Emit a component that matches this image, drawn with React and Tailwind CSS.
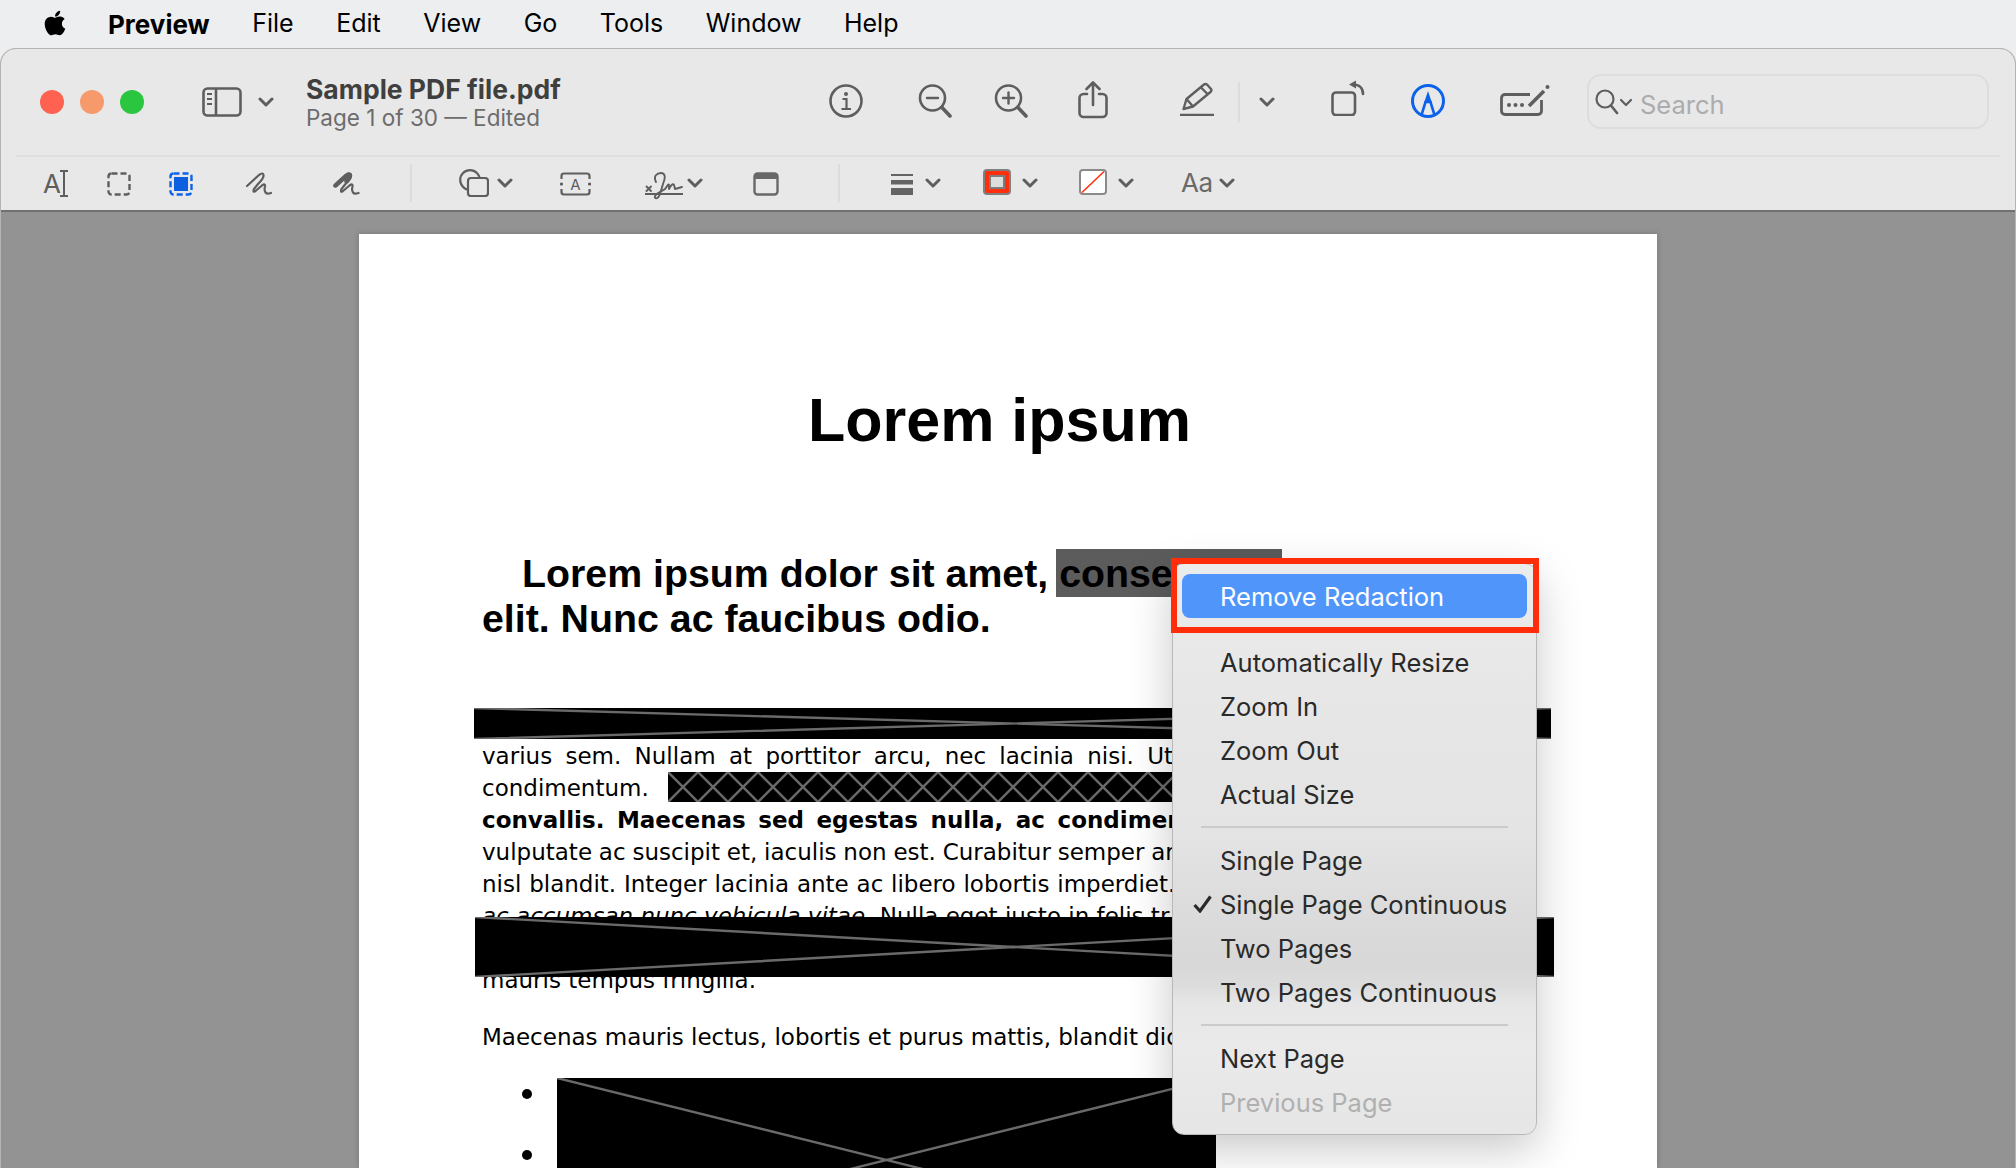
import { FaApple } from "react-icons/fa";

const stroke = "#5e5e5e";

function Chevron({ className = "" }) {
  return (
    <svg width="16" height="10" viewBox="0 0 16 10" fill="none" className={`shrink-0 ${className}`}>
      <path d="M2 2 L8 8 L14 2" stroke={stroke} strokeWidth="3" strokeLinecap="round" strokeLinejoin="round" />
    </svg>
  );
}

function Separator({ className = "" }) {
  return <div className={`w-[2px] shrink-0 bg-[#dcdcdc] ${className}`} />;
}

function Glass({ plus, className = "" }) {
  return (
    <svg width="34" height="34" viewBox="0 0 34 34" fill="none" stroke={stroke} className={`shrink-0 ${className}`}>
      <circle cx="14.5" cy="14" r="12.5" strokeWidth="2.6" />
      <path d="M24 23.5 L32 32" strokeWidth="3.6" strokeLinecap="round" />
      <path d="M9 14 H20" strokeWidth="2.4" strokeLinecap="round" />
      {plus && <path d="M14.5 8.5 V19.5" strokeWidth="2.4" strokeLinecap="round" />}
    </svg>
  );
}

const scribble = "M1 14 L13 3 Q17 0 17.5 3 Q18 6 12 12 L8 17 Q6.5 21 9.5 19 L16 13.5 Q19.5 11 19 14.5 Q18 18 19.5 20.5 Q21 22.5 25 21";

function TitleRow() {
  return (
    <div className="flex h-[106px] items-start pl-[39px]">
      <div className="mt-[41px] flex gap-[16px]">
        <div className="h-[24px] w-[24px] rounded-full bg-[#ff6251]" />
        <div className="h-[24px] w-[24px] rounded-full bg-[#f79a6b]" />
        <div className="h-[24px] w-[24px] rounded-full bg-[#2ac63f]" />
      </div>
      <svg width="40" height="30" viewBox="0 0 40 30" fill="none" stroke={stroke} className="ml-[58px] mt-[38px] shrink-0">
        <rect x="1.5" y="1.5" width="37" height="27" rx="4" strokeWidth="2.6" />
        <path d="M14 2 V28" strokeWidth="2.6" />
        <path d="M5 7 H10 M5 12 H10 M5 17 H10" strokeWidth="2" />
      </svg>
      <Chevron className="ml-[16px] mt-[48px]" />
      <div className="ml-[32px] mt-[24px] w-[523px] shrink-0">
        <div className="text-[26.5px] font-bold leading-[32px] text-[#3f3f3f]">Sample PDF file.pdf</div>
        <div className="text-[22.5px] leading-[26px] text-[#6c6c6c]">Page 1 of 30 — Edited</div>
      </div>
      <svg width="34" height="34" viewBox="0 0 34 34" fill="none" stroke={stroke} className="mt-[35px] shrink-0">
        <circle cx="17" cy="17" r="15.5" strokeWidth="2.6" />
        <circle cx="17" cy="10" r="2" fill={stroke} stroke="none" />
        <path d="M13.5 15 H17.5 V25 M12.5 25 H22" strokeWidth="2.2" />
      </svg>
      <Glass className="ml-[55px] mt-[35px]" />
      <Glass plus className="ml-[42px] mt-[35px]" />
      <svg width="30" height="38" viewBox="0 0 30 38" fill="none" stroke={stroke} strokeWidth="2.6" strokeLinecap="round" strokeLinejoin="round" className="ml-[50px] mt-[32px] shrink-0">
        <path d="M9 13 H5.5 a4 4 0 0 0 -4 4 V32 a4 4 0 0 0 4 4 H24.5 a4 4 0 0 0 4 -4 V17 a4 4 0 0 0 -4 -4 H21" />
        <path d="M15 24 V2 M8.5 8 L15 1.5 L21.5 8" />
      </svg>
      <svg width="34" height="34" viewBox="0 0 34 34" fill="none" stroke={stroke} strokeWidth="2.4" strokeLinejoin="round" className="ml-[72px] mt-[33px] shrink-0">
        <path d="M0 33 H34" strokeWidth="2.6" />
        <path d="M3.5 27 L6.5 17 L24 2.5 Q25.5 1.5 27 2.5 L31 7 Q32 8.5 30.5 10 L13 24.5 Z" />
        <path d="M21 5.5 L28 12.5 M6.5 17 L13 24.5" />
      </svg>
      <Separator className="ml-[24px] mt-[33px] h-[40px]" />
      <Chevron className="ml-[19px] mt-[48px]" />
      <svg width="36" height="36" viewBox="0 0 36 36" fill="none" stroke={stroke} className="ml-[55px] mt-[31px] shrink-0">
        <rect x="2.5" y="12.5" width="22.5" height="22.5" rx="3.5" strokeWidth="2.6" />
        <path d="M33 14 C33 8 29 4.5 23 4.5" strokeWidth="2.6" strokeLinecap="round" />
        <path d="M19 4.5 L26 0.5 V8.5 Z" fill={stroke} stroke="none" />
      </svg>
      <svg width="34" height="34" viewBox="0 0 34 34" fill="none" stroke="#0b63ec" className="ml-[45px] mt-[35px] shrink-0">
        <circle cx="17" cy="17" r="15.5" strokeWidth="3" />
        <path d="M10.5 31 L14.5 18 H19.5 L23.5 31" strokeWidth="2.6" />
        <path d="M17 7 L21 19 H13 Z" fill="#0b63ec" stroke="none" />
      </svg>
      <svg width="50" height="32" viewBox="0 0 50 32" fill="none" stroke={stroke} className="ml-[55px] mt-[35px] shrink-0">
        <path d="M30 10.5 H5 a3.5 3.5 0 0 0 -3.5 3.5 V27 a3.5 3.5 0 0 0 3.5 3.5 H38 a3.5 3.5 0 0 0 3.5 -3.5 V16" strokeWidth="2.8" />
        <circle cx="9" cy="21" r="2" fill={stroke} stroke="none" />
        <circle cx="15.5" cy="21" r="2" fill={stroke} stroke="none" />
        <circle cx="22" cy="21" r="2" fill={stroke} stroke="none" />
        <path d="M29 22 L44 7" strokeWidth="3.6" />
        <circle cx="47.5" cy="3" r="2" fill={stroke} stroke="none" />
      </svg>
      <div className="ml-[37px] mt-[25px] flex h-[55px] w-[402px] shrink-0 items-center rounded-[14px] border-2 border-[#dddddd] pl-[6px]">
        <svg width="38" height="26" viewBox="0 0 38 26" fill="none" stroke={stroke} className="shrink-0">
          <circle cx="10" cy="10" r="8.5" strokeWidth="2.2" />
          <path d="M16 16.5 L22 24" strokeWidth="2.6" strokeLinecap="round" />
          <path d="M26 11 L31 16 L36 11" strokeWidth="2.2" strokeLinecap="round" strokeLinejoin="round" />
        </svg>
        <span className="ml-[7px] mt-[8px] text-[25.5px] text-[#acacac]">Search</span>
      </div>
    </div>
  );
}

function ToolRow() {
  return (
    <div className="flex h-[53px] items-start pl-[42px]">
      <svg width="26" height="28" viewBox="0 0 26 28" fill="none" stroke={stroke} className="mt-[13px] shrink-0 overflow-visible">
        <text x="0" y="23" fontSize="26" fill={stroke} stroke="none">A</text>
        <path d="M17 1 H25 M21 1 V26 M17 26 H25" strokeWidth="2" />
      </svg>
      <svg width="24" height="24" viewBox="0 0 24 24" fill="none" stroke={stroke} className="ml-[38px] mt-[15px] shrink-0">
        <rect x="1.5" y="1.5" width="21" height="21" rx="3" strokeWidth="2.4" strokeDasharray="6 3" />
      </svg>
      <svg width="24" height="24" viewBox="0 0 24 24" fill="none" stroke="#0b63ec" className="ml-[38px] mt-[15px] shrink-0">
        <rect x="1.5" y="1.5" width="21" height="21" rx="3" strokeWidth="2.4" strokeDasharray="6 3" />
        <rect x="5" y="5" width="14" height="14" fill="#0b5fe0" stroke="none" />
      </svg>
      <svg width="26" height="24" viewBox="0 0 26 24" fill="none" stroke={stroke} strokeWidth="2.2" strokeLinecap="round" strokeLinejoin="round" className="ml-[53px] mt-[15px] shrink-0">
        <path d={scribble} />
      </svg>
      <svg width="27" height="24" viewBox="0 0 26 24" fill="none" stroke={stroke} strokeLinecap="round" strokeLinejoin="round" className="ml-[61px] mt-[15px] shrink-0">
        <path d={scribble} strokeWidth="2.2" />
        <path d="M2 13.5 L13 3.5 Q16 1.5 16.5 3.5 Q16.5 6 13 9.5" strokeWidth="4.4" />
      </svg>
      <Separator className="ml-[50px] mt-[7px] h-[38px]" />
      <svg width="30" height="28" viewBox="0 0 30 28" fill="#e8e8e8" stroke={stroke} strokeWidth="2.2" className="ml-[47px] mt-[12px] shrink-0">
        <circle cx="11" cy="11" r="9.8" />
        <rect x="9" y="9" width="20" height="18" rx="3" />
      </svg>
      <Chevron className="ml-[8px] mt-[21px]" />
      <svg width="31" height="24" viewBox="0 0 31 24" fill="none" stroke={stroke} strokeWidth="2.2" className="ml-[47px] mt-[15px] shrink-0">
        <path d="M1.5 7 V4 Q1.5 1.5 4 1.5 H27 Q29.5 1.5 29.5 4 V7 M1.5 17 V20 Q1.5 22.5 4 22.5 H27 Q29.5 22.5 29.5 20 V17" />
        <circle cx="1.5" cy="12" r="1.6" fill={stroke} stroke="none" />
        <circle cx="29.5" cy="12" r="1.6" fill={stroke} stroke="none" />
        <text x="15.5" y="18" fontSize="15" textAnchor="middle" fill={stroke} stroke="none">A</text>
      </svg>
      <svg width="38" height="28" viewBox="0 0 38 28" fill="none" stroke={stroke} strokeWidth="1.9" strokeLinecap="round" strokeLinejoin="round" className="ml-[54px] mt-[15px] shrink-0">
        <path d="M0 22 H38" strokeWidth="2" />
        <path d="M1.5 14.5 L6 19 M6 14.5 L1.5 19" />
        <path d="M11 10 C8 4 12 1 16 1 C20 1 21 5 18 12 L15 22 C13 28 9 27 10 24 C11 21 16 20 20 17 C22 15 23 11 24 13 L24 17 C26 13 28 11 29 13 L30 17 L37 15" />
      </svg>
      <Chevron className="ml-[4px] mt-[21px]" />
      <svg width="26" height="24" viewBox="0 0 26 24" fill="none" stroke="#686868" strokeWidth="2.4" className="ml-[50px] mt-[15px] shrink-0">
        <rect x="1.5" y="1.5" width="23" height="21" rx="3" />
        <path d="M2 3.5 Q2 2 4 2 H22 Q24 2 24 3.5 V7 H2 Z" fill="#686868" stroke="none" />
      </svg>
      <Separator className="ml-[59px] mt-[7px] h-[38px]" />
      <svg width="22" height="21" viewBox="0 0 22 21" fill="#646464" className="ml-[51px] mt-[17px] shrink-0">
        <rect y="0" width="22" height="2" />
        <rect y="6" width="22" height="4.5" />
        <rect y="14" width="22" height="7" />
      </svg>
      <Chevron className="ml-[12px] mt-[21px]" />
      <svg width="28" height="26" viewBox="0 0 28 26" className="ml-[42px] mt-[12px] shrink-0">
        <rect x="1" y="1" width="26" height="24" rx="3" fill="#ff2f0b" stroke="#808080" strokeWidth="2" />
        <rect x="7" y="7" width="14" height="12" fill="#dedede" stroke="#7d7d7d" strokeWidth="2" />
      </svg>
      <Chevron className="ml-[11px] mt-[21px]" />
      <svg width="28" height="26" viewBox="0 0 28 26" className="ml-[41px] mt-[12px] shrink-0">
        <rect x="1" y="1" width="26" height="24" rx="3" fill="#ffffff" stroke="#8a8a8a" strokeWidth="2" />
        <path d="M3 23.5 L25 2.5" stroke="#ff2f0b" strokeWidth="1.6" />
      </svg>
      <Chevron className="ml-[11px] mt-[21px]" />
      <span className="ml-[47px] mt-[9px] w-[30px] shrink-0 text-[26px] leading-[34px] tracking-[-0.5px] text-[#6a6a6a]">Aa</span>
      <Chevron className="ml-[8px] mt-[21px]" />
    </div>
  );
}

function Redacted({ className }) {
  return (
    <div className={`absolute bg-black ${className}`}>
      <svg className="h-full w-full" viewBox="0 0 100 100" preserveAspectRatio="none">
        <path d="M0 0 L100 100 M100 0 L0 100" stroke="#6a6a6a" strokeWidth="2.4" vectorEffect="non-scaling-stroke" fill="none" />
      </svg>
    </div>
  );
}

function HatchedRedaction() {
  return (
    <div className="absolute left-[309px] top-[538px] h-[30px] w-[520px] bg-black">
      <svg className="h-full w-full">
        <defs>
          <pattern id="hatch" width="30" height="30" patternUnits="userSpaceOnUse">
            <path d="M0 0 L30 30 M30 0 L0 30" stroke="#6a6a6a" strokeWidth="2.4" fill="none" />
          </pattern>
        </defs>
        <rect width="100%" height="100%" fill="url(#hatch)" />
      </svg>
    </div>
  );
}

function PdfPage() {
  return (
    <div className="relative ml-[358px] h-[934px] w-[1298px] overflow-hidden bg-white font-['Liberation_Sans'] text-black shadow-[0_0_6px_rgba(0,0,0,0.2)]">
      <div className="ml-[123px] w-[1035px] pt-[151px]">
        <h1 className="text-center text-[61px] font-bold leading-[70px]">Lorem ipsum</h1>
        <p className="mt-[96px] whitespace-nowrap text-[39.3px] font-bold leading-[45px]">
          <span className="ml-[40px]">Lorem ipsum dolor sit amet, conse</span>
          <br />
          elit. Nunc ac faucibus odio.
        </p>
        <div className="mt-[99px] whitespace-nowrap font-['DejaVu_Sans'] text-[23px] leading-[32px]">
          <div className="[word-spacing:6px]">varius sem. Nullam at porttitor arcu, nec lacinia nisi. Ut</div>
          <div>condimentum.</div>
          <div className="font-bold [word-spacing:4.5px]">convallis. Maecenas sed egestas nulla, ac condimen</div>
          <div className="[word-spacing:-0.5px]">vulputate ac suscipit et, iaculis non est. Curabitur semper ar</div>
          <div className="[word-spacing:0.5px]">nisl blandit. Integer lacinia ante ac libero lobortis imperdiet.</div>
          <div><em>ac accumsan nunc vehicula vitae.</em> Nulla eget justo in felis tr</div>
          <div className="h-[32px]" />
          <div>mauris tempus fringilla.</div>
          <div className="mt-[25px]">Maecenas mauris lectus, lobortis et purus mattis, blandit dic</div>
        </div>
        <div className="ml-[40px] mt-[36px] h-[10px] w-[10px] rounded-full bg-black" />
        <div className="ml-[40px] mt-[51px] h-[10px] w-[10px] rounded-full bg-black" />
      </div>
      <div className="absolute left-[697px] top-[315px] h-[48px] w-[226px] bg-black/[0.64]" />
      <Redacted className="left-[115px] top-[474px] h-[31px] w-[1077px]" />
      <HatchedRedaction />
      <Redacted className="left-[116px] top-[683px] h-[60px] w-[1079px]" />
      <Redacted className="left-[198px] top-[844px] h-[164px] w-[659px]" />
    </div>
  );
}

function MenuItem({ children, checked, disabled }) {
  return (
    <div className={`relative h-[44px] pl-[47px] text-[25.5px] leading-[46px] ${disabled ? "text-[#b0b0b0]" : "text-[#2a2a2a]"}`}>
      {checked && (
        <svg width="19" height="18" viewBox="0 0 19 18" fill="none" className="absolute left-[20px] top-[13px]">
          <path d="M1.5 10 L7 16 L17.5 1.5" stroke="#2a2a2a" strokeWidth="3.2" />
        </svg>
      )}
      {children}
    </div>
  );
}

function MenuDivider() {
  return (
    <div className="flex h-[22px] items-center px-[28px]">
      <div className="h-[2px] w-full bg-[#cbcbcb]" />
    </div>
  );
}

function ContextMenu() {
  return (
    <div className="absolute left-[1172px] top-[563px] w-[365px] rounded-[12px] border border-[#b8b8b8] bg-[linear-gradient(180deg,#ebecec_0%,#e9e9e9_13%,#e5e5e5_33%,#e4e4e4_47%,#dcdcdc_60%,#d8d8d8_70%,#dcdcdc_74%,#e6e6e6_77%,#eaeaea_84%,#e6e6e6_100%)] pb-[10px] pt-[10px] font-['Inter'] shadow-[0_14px_45px_rgba(0,0,0,0.22)]">
      <div className="px-[9px]">
        <div className="h-[44px] rounded-[8px] bg-[#5096fa] pl-[38px] text-[25.5px] leading-[46px] text-white">Remove Redaction</div>
      </div>
      <div className="h-[22px]" />
      <MenuItem>Automatically Resize</MenuItem>
      <MenuItem>Zoom In</MenuItem>
      <MenuItem>Zoom Out</MenuItem>
      <MenuItem>Actual Size</MenuItem>
      <MenuDivider />
      <MenuItem>Single Page</MenuItem>
      <MenuItem checked>Single Page Continuous</MenuItem>
      <MenuItem>Two Pages</MenuItem>
      <MenuItem>Two Pages Continuous</MenuItem>
      <MenuDivider />
      <MenuItem>Next Page</MenuItem>
      <MenuItem disabled>Previous Page</MenuItem>
      <div className="absolute -left-[2px] -top-[6px] h-[75px] w-[368px] border-[6px] border-[#ff2d0a]" />
    </div>
  );
}

export default function App() {
  return (
    <div className="relative h-[1168px] w-[2016px] overflow-hidden bg-[#eceef0] font-['Inter']">
      {/* menu bar */}
      <div className="flex h-[48px] items-center gap-[42.5px] pl-[41px] text-[25px] text-black">
        <div className="flex items-center gap-[39px]">
          <FaApple size={28} className="-mt-[3px]" />
          <span className="text-[26px] font-bold">Preview</span>
        </div>
        <span>File</span>
        <span>Edit</span>
        <span>View</span>
        <span>Go</span>
        <span>Tools</span>
        <span>Window</span>
        <span>Help</span>
      </div>
      {/* window */}
      <div className="flex h-[1120px] flex-col overflow-hidden rounded-t-[16px] border-x border-t border-[#b4b4b4] bg-[#939393]">
        <div className="h-[163px] shrink-0 border-b-2 border-[#707070] bg-[#e8e8e8]">
          <TitleRow />
          <div className="mx-[15px] h-[2px] bg-[#dedede]" />
          <ToolRow />
        </div>
        <div className="flex-1 pt-[22px]">
          <PdfPage />
        </div>
      </div>
      <ContextMenu />
    </div>
  );
}
